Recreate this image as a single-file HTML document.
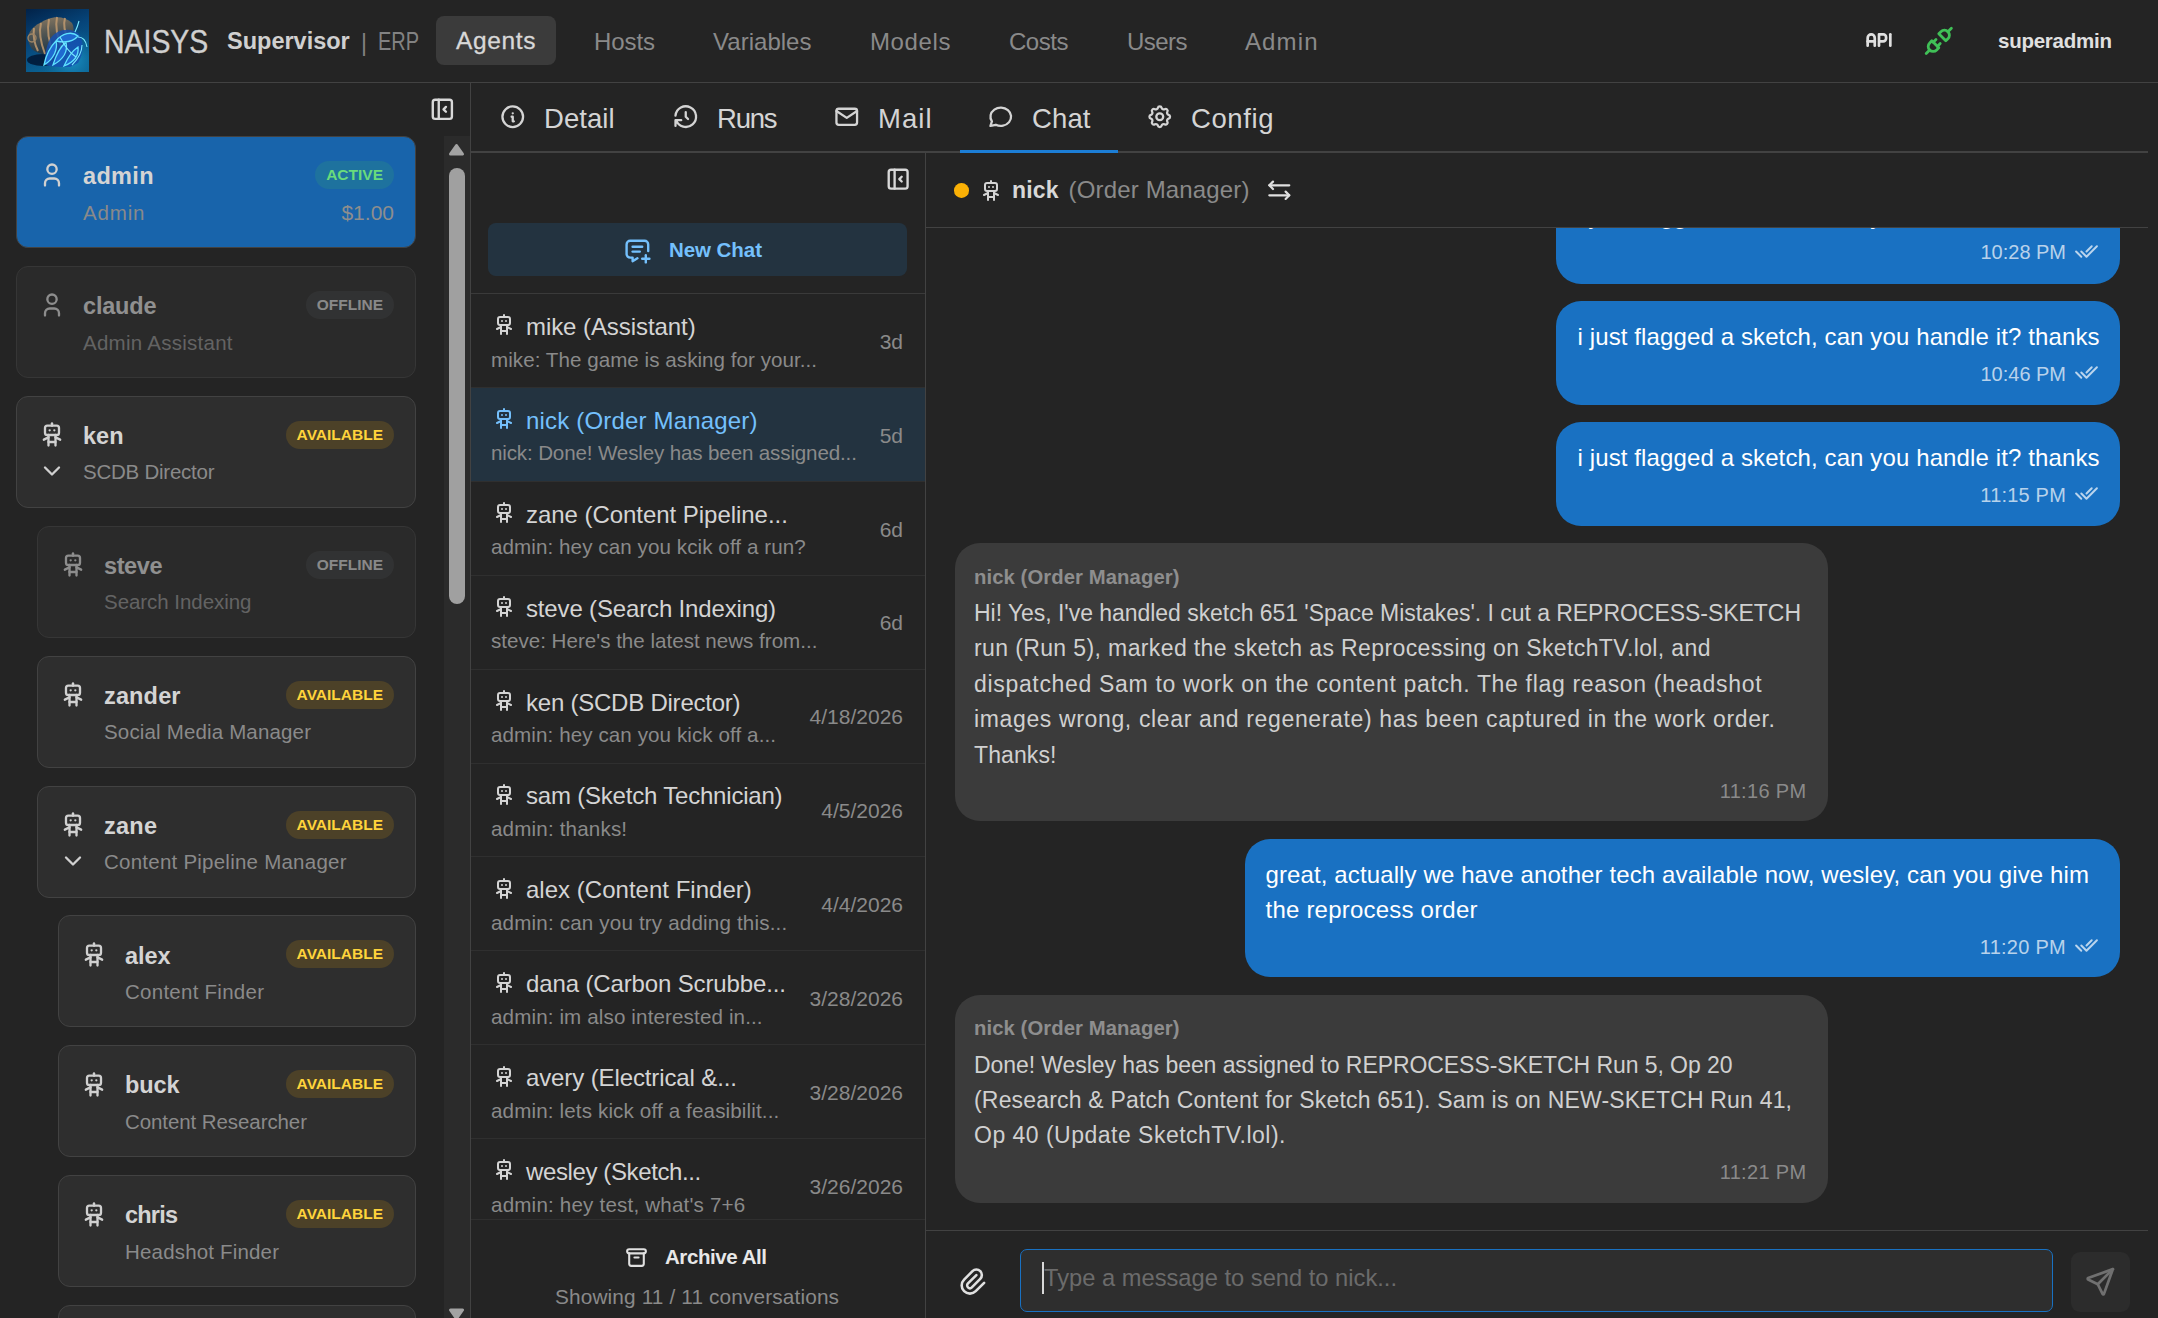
<!DOCTYPE html><html><head><meta charset="utf-8"><title>NAISYS Supervisor</title><style>
*{box-sizing:border-box;margin:0;padding:0}
html,body{width:2158px;height:1318px;overflow:hidden;background:#242424}
body{position:relative;font-family:"Liberation Sans",sans-serif;color:#c9c9c9}
.t{position:absolute;line-height:1;white-space:nowrap}
.b{position:absolute}
.ic{position:absolute;display:block}
</style></head><body>
<div class="b" style="left:0px;top:82px;width:2158px;height:1px;background:#424242"></div>
<svg class="ic" style="left:26px;top:9px;width:63px;height:63px" viewBox="0 0 63 63">
<defs>
<linearGradient id="lbg" x1="0" y1="0" x2="0.4" y2="1"><stop offset="0" stop-color="#022248"/><stop offset="0.5" stop-color="#06457a"/><stop offset="1" stop-color="#0b6494"/></linearGradient>
<radialGradient id="lglow" cx="0.72" cy="0.8" r="0.5"><stop offset="0" stop-color="#22a8e0" stop-opacity="0.7"/><stop offset="1" stop-color="#0e6a9a" stop-opacity="0"/></radialGradient>
<linearGradient id="lshell" x1="0" y1="0" x2="0.2" y2="1"><stop offset="0" stop-color="#8c7a62"/><stop offset="0.5" stop-color="#4f5452"/><stop offset="1" stop-color="#223848"/></linearGradient>
</defs>
<rect width="63" height="63" fill="url(#lbg)"/>
<rect width="63" height="63" fill="url(#lglow)"/>
<ellipse cx="17" cy="51" rx="16" ry="6" fill="#011a38" opacity="0.9"/>
<path d="M2 28 C3 20 12 14 22 10 C30 7 40 8 46 14 C50 20 46 34 36 42 C26 48 12 46 6 40 C3 36 2 32 2 28z" fill="url(#lshell)"/>
<path d="M8 19 C7 26 8 34 12 42 M15 14 C13 22 14 32 19 45 M23 10 C21 20 22 32 28 45 M31 8 C29 18 31 28 36 40 M39 9 C37 16 39 24 43 31" stroke="#c09a70" stroke-width="2" fill="none" opacity="0.85"/>
<circle cx="6" cy="29" r="4" fill="none" stroke="#9c8466" stroke-width="1.4"/>
<path d="M24 30 C30 20 44 18 52 24 C58 30 58 44 52 54 L44 58 C36 58 26 58 20 56 C18 48 20 38 24 30z" fill="#1550b0" opacity="0.85"/>
<path d="M18 56 C20 46 24 38 30 32 C32 40 28 50 18 56z M27 56 C30 46 34 38 40 33 C42 42 38 50 27 56z M38 57 C42 48 46 42 52 38 C53 46 48 53 38 57z M30 32 C36 24 46 22 52 27 C48 32 40 34 30 32z" fill="#1f6ad0" stroke="#5fe2ff" stroke-width="1.3"/>
<path d="M46 56 C52 50 56 44 56 36 M49 23 C51 19 52 16 53 12 M52 28 C57 28 60 32 61 38 M34 28 C38 36 44 44 50 48" stroke="#7aeaff" stroke-width="1.1" fill="none"/>
</svg>
<div class="t" style="left:104.00px;top:26.28px;font-size:32.5px;color:#d0d0d0;font-weight:400;transform:scaleX(0.875);transform-origin:0 0;-webkit-text-stroke:0.35px #d0d0d0">NAISYS</div>
<div class="t" style="left:227.00px;top:30.10px;font-size:23.5px;color:#d0d0d0;font-weight:700;">Supervisor</div>
<div class="t" style="left:361.00px;top:31.53px;font-size:23px;color:#828282;font-weight:400;">|</div>
<div class="t" style="left:378.00px;top:29.13px;font-size:25px;color:#828282;font-weight:400;transform:scaleX(0.8);transform-origin:0 0">ERP</div>
<div class="b" style="left:436px;top:16px;width:120px;height:49px;background:#3b3b3b;border-radius:8px"></div>
<div class="t" style="left:456.00px;top:29.26px;font-size:24.5px;color:#d8d8d8;font-weight:400;letter-spacing:0.644px;-webkit-text-stroke:0.3px #d8d8d8">Agents</div>
<div class="t" style="left:594.00px;top:29.68px;font-size:24px;color:#8a8a8a;font-weight:400;letter-spacing:-0.090px;">Hosts</div>
<div class="t" style="left:713.00px;top:29.68px;font-size:24px;color:#8a8a8a;font-weight:400;letter-spacing:0.027px;">Variables</div>
<div class="t" style="left:870.00px;top:29.68px;font-size:24px;color:#8a8a8a;font-weight:400;letter-spacing:0.625px;">Models</div>
<div class="t" style="left:1009.00px;top:29.68px;font-size:24px;color:#8a8a8a;font-weight:400;letter-spacing:-0.465px;">Costs</div>
<div class="t" style="left:1127.00px;top:29.68px;font-size:24px;color:#8a8a8a;font-weight:400;letter-spacing:-0.543px;">Users</div>
<div class="t" style="left:1245.00px;top:29.68px;font-size:24px;color:#8a8a8a;font-weight:400;letter-spacing:1.117px;">Admin</div>
<svg class="ic" style="left:1862.3px;top:22.8px;width:34px;height:34px;color:#e0e0e0;" viewBox="0 0 24 24" fill="none" stroke="currentColor" stroke-width="1.9" stroke-linecap="round" stroke-linejoin="round"><path d="M4 13h5"/><path d="M12 16v-8h3a2 2 0 0 1 2 2v1a2 2 0 0 1 -2 2h-3"/><path d="M20 8v8"/><path d="M9 16v-5.5a2.5 2.5 0 0 0 -5 0v5.5"/></svg>
<svg class="ic" style="left:1922px;top:24px;width:33.6px;height:33.6px;color:#40c057;" viewBox="0 0 24 24" fill="none" stroke="currentColor" stroke-width="2" stroke-linecap="round" stroke-linejoin="round"><path d="M7 12l5 5l-1.5 1.5a3.536 3.536 0 1 1 -5 -5l1.5 -1.5z"/><path d="M17 12l-5 -5l1.5 -1.5a3.536 3.536 0 1 1 5 5l-1.5 1.5z"/><path d="M3 21l2.5 -2.5"/><path d="M18.5 5.5l2.5 -2.5"/><path d="M10 11l-2 2"/><path d="M13 14l-2 2"/></svg>
<div class="t" style="left:1998.00px;top:31.24px;font-size:20.5px;color:#e0e0e0;font-weight:700;letter-spacing:-0.245px;">superadmin</div>
<div class="b" style="left:470px;top:83px;width:1px;height:1235px;background:#424242"></div>
<svg class="ic" style="left:428.4px;top:95.4px;width:28.7px;height:28.7px;color:#d8d8d8;" viewBox="0 0 24 24" fill="none" stroke="currentColor" stroke-width="2" stroke-linecap="round" stroke-linejoin="round"><path d="M4 6a2 2 0 0 1 2 -2h12a2 2 0 0 1 2 2v12a2 2 0 0 1 -2 2h-12a2 2 0 0 1 -2 -2z"/><path d="M9 4v16"/><path d="M15 10l-2 2l2 2"/></svg>
<div class="b" style="left:444px;top:136px;width:26px;height:1182px;background:#2b2b2b"></div>
<svg class="ic" style="left:448px;top:143px;width:17px;height:13px" viewBox="0 0 17 13"><path d="M8.5 2.5 L14.5 11 H2.5z" fill="#a3a3a3" stroke="#a3a3a3" stroke-width="3" stroke-linejoin="round"/></svg>
<div class="b" style="left:449px;top:168px;width:16px;height:436px;background:#a0a0a0;border-radius:8px"></div>
<svg class="ic" style="left:448px;top:1308px;width:17px;height:13px" viewBox="0 0 17 13"><path d="M8.5 10.5 L14.5 2 H2.5z" fill="#a3a3a3" stroke="#a3a3a3" stroke-width="3" stroke-linejoin="round"/></svg>
<div class="b" style="left:16px;top:136.0px;width:400px;height:112px;background:#1864ab;border:1px solid #424242;border-radius:12px;"></div>
<div class="b" style="left:0;top:0;width:2158px;height:1318px;">
<svg class="ic" style="left:38.4px;top:161.1px;width:28px;height:28px;color:#d0d0d0;" viewBox="0 0 24 24" fill="none" stroke="currentColor" stroke-width="2" stroke-linecap="round" stroke-linejoin="round"><path d="M8 7a4 4 0 1 0 8 0a4 4 0 0 0 -8 0"/><path d="M6 21v-2a4 4 0 0 1 4 -4h4a4 4 0 0 1 4 4v2"/></svg>
<div class="t" style="left:83.00px;top:165.10px;font-size:23.5px;color:#d4d4d4;font-weight:700;letter-spacing:0.320px;">admin</div>
<div class="t" style="left:83.00px;top:202.64px;font-size:20.5px;color:#8a8a8a;font-weight:400;letter-spacing:0.848px;">Admin</div>
<div class="b" style="right:1764px;top:161.0px;height:28px;padding:0 11px;border-radius:14px;background:rgba(64,192,87,0.15);color:#69db7c;font-weight:700;font-size:15.5px;line-height:28px;white-space:nowrap">ACTIVE</div>
<div class="t" style="right:1764.00px;top:202.22px;font-size:21px;color:#8e8e8e;font-weight:400;">$1.00</div>
</div>
<div class="b" style="left:16px;top:265.9px;width:400px;height:112px;background:#2e2e2e;border:1px solid #424242;border-radius:12px;opacity:0.6;"></div>
<div class="b" style="left:0;top:0;width:2158px;height:1318px;opacity:0.6;">
<svg class="ic" style="left:38.4px;top:291.0px;width:28px;height:28px;color:#d0d0d0;" viewBox="0 0 24 24" fill="none" stroke="currentColor" stroke-width="2" stroke-linecap="round" stroke-linejoin="round"><path d="M8 7a4 4 0 1 0 8 0a4 4 0 0 0 -8 0"/><path d="M6 21v-2a4 4 0 0 1 4 -4h4a4 4 0 0 1 4 4v2"/></svg>
<div class="t" style="left:83.00px;top:295.00px;font-size:23.5px;color:#d4d4d4;font-weight:700;letter-spacing:-0.191px;">claude</div>
<div class="t" style="left:83.00px;top:332.54px;font-size:20.5px;color:#8a8a8a;font-weight:400;letter-spacing:0.261px;">Admin Assistant</div>
<div class="b" style="right:1764px;top:290.9px;height:28px;padding:0 11px;border-radius:14px;background:rgba(134,142,150,0.15);color:#c9c9c9;font-weight:700;font-size:15.5px;line-height:28px;white-space:nowrap">OFFLINE</div>
</div>
<div class="b" style="left:16px;top:395.8px;width:400px;height:112px;background:#2e2e2e;border:1px solid #424242;border-radius:12px;"></div>
<div class="b" style="left:0;top:0;width:2158px;height:1318px;">
<svg class="ic" style="left:38px;top:421.40000000000003px;width:28px;height:28px;color:#d0d0d0;" viewBox="0 0 24 24" fill="none" stroke="currentColor" stroke-width="2" stroke-linecap="round" stroke-linejoin="round"><path d="M6 6a2 2 0 0 1 2 -2h8a2 2 0 0 1 2 2v4a2 2 0 0 1 -2 2h-8a2 2 0 0 1 -2 -2z"/><path d="M12 2v2"/><path d="M9 12v9"/><path d="M15 12v9"/><path d="M5 16l4 -2"/><path d="M15 14l4 2"/><path d="M9 18h6"/><path d="M10 8v.01"/><path d="M14 8v.01"/></svg>
<svg class="ic" style="left:38.4px;top:457.3px;width:28px;height:28px;color:#d0d0d0;" viewBox="0 0 24 24" fill="none" stroke="currentColor" stroke-width="2" stroke-linecap="round" stroke-linejoin="round"><path d="M6 9l6 6l6 -6"/></svg>
<div class="t" style="left:83.00px;top:424.90px;font-size:23.5px;color:#d4d4d4;font-weight:700;letter-spacing:0.000px;">ken</div>
<div class="t" style="left:83.00px;top:462.44px;font-size:20.5px;color:#8a8a8a;font-weight:400;letter-spacing:-0.243px;">SCDB Director</div>
<div class="b" style="right:1764px;top:420.8px;height:28px;padding:0 11px;border-radius:14px;background:rgba(250,176,5,0.15);color:#ffd43b;font-weight:700;font-size:15.5px;line-height:28px;white-space:nowrap">AVAILABLE</div>
</div>
<div class="b" style="left:37px;top:525.7px;width:379px;height:112px;background:#2e2e2e;border:1px solid #424242;border-radius:12px;opacity:0.6;"></div>
<div class="b" style="left:0;top:0;width:2158px;height:1318px;opacity:0.6;">
<svg class="ic" style="left:59px;top:551.3000000000001px;width:28px;height:28px;color:#d0d0d0;" viewBox="0 0 24 24" fill="none" stroke="currentColor" stroke-width="2" stroke-linecap="round" stroke-linejoin="round"><path d="M6 6a2 2 0 0 1 2 -2h8a2 2 0 0 1 2 2v4a2 2 0 0 1 -2 2h-8a2 2 0 0 1 -2 -2z"/><path d="M12 2v2"/><path d="M9 12v9"/><path d="M15 12v9"/><path d="M5 16l4 -2"/><path d="M15 14l4 2"/><path d="M9 18h6"/><path d="M10 8v.01"/><path d="M14 8v.01"/></svg>
<div class="t" style="left:104.00px;top:554.80px;font-size:23.5px;color:#d4d4d4;font-weight:700;letter-spacing:-0.402px;">steve</div>
<div class="t" style="left:104.00px;top:592.34px;font-size:20.5px;color:#8a8a8a;font-weight:400;letter-spacing:-0.047px;">Search Indexing</div>
<div class="b" style="right:1764px;top:550.7px;height:28px;padding:0 11px;border-radius:14px;background:rgba(134,142,150,0.15);color:#c9c9c9;font-weight:700;font-size:15.5px;line-height:28px;white-space:nowrap">OFFLINE</div>
</div>
<div class="b" style="left:37px;top:655.6px;width:379px;height:112px;background:#2e2e2e;border:1px solid #424242;border-radius:12px;"></div>
<div class="b" style="left:0;top:0;width:2158px;height:1318px;">
<svg class="ic" style="left:59px;top:681.2px;width:28px;height:28px;color:#d0d0d0;" viewBox="0 0 24 24" fill="none" stroke="currentColor" stroke-width="2" stroke-linecap="round" stroke-linejoin="round"><path d="M6 6a2 2 0 0 1 2 -2h8a2 2 0 0 1 2 2v4a2 2 0 0 1 -2 2h-8a2 2 0 0 1 -2 -2z"/><path d="M12 2v2"/><path d="M9 12v9"/><path d="M15 12v9"/><path d="M5 16l4 -2"/><path d="M15 14l4 2"/><path d="M9 18h6"/><path d="M10 8v.01"/><path d="M14 8v.01"/></svg>
<div class="t" style="left:104.00px;top:684.70px;font-size:23.5px;color:#d4d4d4;font-weight:700;letter-spacing:0.150px;">zander</div>
<div class="t" style="left:104.00px;top:722.24px;font-size:20.5px;color:#8a8a8a;font-weight:400;letter-spacing:0.159px;">Social Media Manager</div>
<div class="b" style="right:1764px;top:680.6px;height:28px;padding:0 11px;border-radius:14px;background:rgba(250,176,5,0.15);color:#ffd43b;font-weight:700;font-size:15.5px;line-height:28px;white-space:nowrap">AVAILABLE</div>
</div>
<div class="b" style="left:37px;top:785.5px;width:379px;height:112px;background:#2e2e2e;border:1px solid #424242;border-radius:12px;"></div>
<div class="b" style="left:0;top:0;width:2158px;height:1318px;">
<svg class="ic" style="left:59px;top:811.1px;width:28px;height:28px;color:#d0d0d0;" viewBox="0 0 24 24" fill="none" stroke="currentColor" stroke-width="2" stroke-linecap="round" stroke-linejoin="round"><path d="M6 6a2 2 0 0 1 2 -2h8a2 2 0 0 1 2 2v4a2 2 0 0 1 -2 2h-8a2 2 0 0 1 -2 -2z"/><path d="M12 2v2"/><path d="M9 12v9"/><path d="M15 12v9"/><path d="M5 16l4 -2"/><path d="M15 14l4 2"/><path d="M9 18h6"/><path d="M10 8v.01"/><path d="M14 8v.01"/></svg>
<svg class="ic" style="left:59.4px;top:847.0px;width:28px;height:28px;color:#d0d0d0;" viewBox="0 0 24 24" fill="none" stroke="currentColor" stroke-width="2" stroke-linecap="round" stroke-linejoin="round"><path d="M6 9l6 6l6 -6"/></svg>
<div class="t" style="left:104.00px;top:814.60px;font-size:23.5px;color:#d4d4d4;font-weight:700;letter-spacing:0.250px;">zane</div>
<div class="t" style="left:104.00px;top:852.14px;font-size:20.5px;color:#8a8a8a;font-weight:400;letter-spacing:0.237px;">Content Pipeline Manager</div>
<div class="b" style="right:1764px;top:810.5px;height:28px;padding:0 11px;border-radius:14px;background:rgba(250,176,5,0.15);color:#ffd43b;font-weight:700;font-size:15.5px;line-height:28px;white-space:nowrap">AVAILABLE</div>
</div>
<div class="b" style="left:58px;top:915.4px;width:358px;height:112px;background:#2e2e2e;border:1px solid #424242;border-radius:12px;"></div>
<div class="b" style="left:0;top:0;width:2158px;height:1318px;">
<svg class="ic" style="left:80px;top:941.0px;width:28px;height:28px;color:#d0d0d0;" viewBox="0 0 24 24" fill="none" stroke="currentColor" stroke-width="2" stroke-linecap="round" stroke-linejoin="round"><path d="M6 6a2 2 0 0 1 2 -2h8a2 2 0 0 1 2 2v4a2 2 0 0 1 -2 2h-8a2 2 0 0 1 -2 -2z"/><path d="M12 2v2"/><path d="M9 12v9"/><path d="M15 12v9"/><path d="M5 16l4 -2"/><path d="M15 14l4 2"/><path d="M9 18h6"/><path d="M10 8v.01"/><path d="M14 8v.01"/></svg>
<div class="t" style="left:125.00px;top:944.50px;font-size:23.5px;color:#d4d4d4;font-weight:700;letter-spacing:-0.083px;">alex</div>
<div class="t" style="left:125.00px;top:982.04px;font-size:20.5px;color:#8a8a8a;font-weight:400;letter-spacing:0.261px;">Content Finder</div>
<div class="b" style="right:1764px;top:940.4px;height:28px;padding:0 11px;border-radius:14px;background:rgba(250,176,5,0.15);color:#ffd43b;font-weight:700;font-size:15.5px;line-height:28px;white-space:nowrap">AVAILABLE</div>
</div>
<div class="b" style="left:58px;top:1045.3px;width:358px;height:112px;background:#2e2e2e;border:1px solid #424242;border-radius:12px;"></div>
<div class="b" style="left:0;top:0;width:2158px;height:1318px;">
<svg class="ic" style="left:80px;top:1070.8999999999999px;width:28px;height:28px;color:#d0d0d0;" viewBox="0 0 24 24" fill="none" stroke="currentColor" stroke-width="2" stroke-linecap="round" stroke-linejoin="round"><path d="M6 6a2 2 0 0 1 2 -2h8a2 2 0 0 1 2 2v4a2 2 0 0 1 -2 2h-8a2 2 0 0 1 -2 -2z"/><path d="M12 2v2"/><path d="M9 12v9"/><path d="M15 12v9"/><path d="M5 16l4 -2"/><path d="M15 14l4 2"/><path d="M9 18h6"/><path d="M10 8v.01"/><path d="M14 8v.01"/></svg>
<div class="t" style="left:125.00px;top:1074.40px;font-size:23.5px;color:#d4d4d4;font-weight:700;letter-spacing:-0.120px;">buck</div>
<div class="t" style="left:125.00px;top:1111.94px;font-size:20.5px;color:#8a8a8a;font-weight:400;letter-spacing:-0.086px;">Content Researcher</div>
<div class="b" style="right:1764px;top:1070.3px;height:28px;padding:0 11px;border-radius:14px;background:rgba(250,176,5,0.15);color:#ffd43b;font-weight:700;font-size:15.5px;line-height:28px;white-space:nowrap">AVAILABLE</div>
</div>
<div class="b" style="left:58px;top:1175.2px;width:358px;height:112px;background:#2e2e2e;border:1px solid #424242;border-radius:12px;"></div>
<div class="b" style="left:0;top:0;width:2158px;height:1318px;">
<svg class="ic" style="left:80px;top:1200.8px;width:28px;height:28px;color:#d0d0d0;" viewBox="0 0 24 24" fill="none" stroke="currentColor" stroke-width="2" stroke-linecap="round" stroke-linejoin="round"><path d="M6 6a2 2 0 0 1 2 -2h8a2 2 0 0 1 2 2v4a2 2 0 0 1 -2 2h-8a2 2 0 0 1 -2 -2z"/><path d="M12 2v2"/><path d="M9 12v9"/><path d="M15 12v9"/><path d="M5 16l4 -2"/><path d="M15 14l4 2"/><path d="M9 18h6"/><path d="M10 8v.01"/><path d="M14 8v.01"/></svg>
<div class="t" style="left:125.00px;top:1204.30px;font-size:23.5px;color:#d4d4d4;font-weight:700;letter-spacing:-0.793px;">chris</div>
<div class="t" style="left:125.00px;top:1241.84px;font-size:20.5px;color:#8a8a8a;font-weight:400;letter-spacing:0.174px;">Headshot Finder</div>
<div class="b" style="right:1764px;top:1200.2px;height:28px;padding:0 11px;border-radius:14px;background:rgba(250,176,5,0.15);color:#ffd43b;font-weight:700;font-size:15.5px;line-height:28px;white-space:nowrap">AVAILABLE</div>
</div>
<div class="b" style="left:58px;top:1305.1px;width:358px;height:112px;background:#2e2e2e;border:1px solid #424242;border-radius:12px;"></div>
<div class="b" style="left:0;top:0;width:2158px;height:1318px;">
<svg class="ic" style="left:80px;top:1330.6999999999998px;width:28px;height:28px;color:#d0d0d0;" viewBox="0 0 24 24" fill="none" stroke="currentColor" stroke-width="2" stroke-linecap="round" stroke-linejoin="round"><path d="M6 6a2 2 0 0 1 2 -2h8a2 2 0 0 1 2 2v4a2 2 0 0 1 -2 2h-8a2 2 0 0 1 -2 -2z"/><path d="M12 2v2"/><path d="M9 12v9"/><path d="M15 12v9"/><path d="M5 16l4 -2"/><path d="M15 14l4 2"/><path d="M9 18h6"/><path d="M10 8v.01"/><path d="M14 8v.01"/></svg>
<div class="t" style="left:125.00px;top:1334.20px;font-size:23.5px;color:#d4d4d4;font-weight:700;">dave</div>
<div class="t" style="left:125.00px;top:1371.74px;font-size:20.5px;color:#8a8a8a;font-weight:400;">Writer</div>
<div class="b" style="right:1764px;top:1330.1px;height:28px;padding:0 11px;border-radius:14px;background:rgba(250,176,5,0.15);color:#ffd43b;font-weight:700;font-size:15.5px;line-height:28px;white-space:nowrap">AVAILABLE</div>
</div>
<div class="b" style="left:471px;top:151px;width:1677px;height:2px;background:#424242"></div>
<svg class="ic" style="left:498.9px;top:102.9px;width:27.5px;height:27.5px;color:#d4d4d4;" viewBox="0 0 24 24" fill="none" stroke="currentColor" stroke-width="2" stroke-linecap="round" stroke-linejoin="round"><path d="M3 12a9 9 0 1 0 18 0a9 9 0 0 0 -18 0"/><path d="M12 9h.01"/><path d="M11 12h1v4h1"/></svg>
<div class="t" style="left:544.00px;top:104.72px;font-size:27.5px;color:#d4d4d4;font-weight:400;letter-spacing:0.037px;">Detail</div>
<svg class="ic" style="left:671.5px;top:102.9px;width:27.5px;height:27.5px;color:#d4d4d4;" viewBox="0 0 24 24" fill="none" stroke="currentColor" stroke-width="2" stroke-linecap="round" stroke-linejoin="round"><path d="M12 8l0 4l2 2"/><path d="M3.05 11a9 9 0 1 1 .5 4m-.5 5v-5h5"/></svg>
<div class="t" style="left:717.00px;top:104.72px;font-size:27.5px;color:#d4d4d4;font-weight:400;letter-spacing:-1.234px;">Runs</div>
<svg class="ic" style="left:832.9px;top:102.9px;width:27.5px;height:27.5px;color:#d4d4d4;" viewBox="0 0 24 24" fill="none" stroke="currentColor" stroke-width="2" stroke-linecap="round" stroke-linejoin="round"><path d="M3 7a2 2 0 0 1 2 -2h14a2 2 0 0 1 2 2v10a2 2 0 0 1 -2 2h-14a2 2 0 0 1 -2 -2v-10z"/><path d="M3 7l9 6l9 -6"/></svg>
<div class="t" style="left:878.00px;top:104.72px;font-size:27.5px;color:#d4d4d4;font-weight:400;letter-spacing:1.026px;">Mail</div>
<svg class="ic" style="left:986.9px;top:102.9px;width:27.5px;height:27.5px;color:#d4d4d4;" viewBox="0 0 24 24" fill="none" stroke="currentColor" stroke-width="2" stroke-linecap="round" stroke-linejoin="round"><path d="M3 20l1.3 -3.9c-2.324 -3.437 -1.426 -7.872 2.1 -10.374c3.526 -2.501 8.59 -2.296 11.845 .48c3.255 2.777 3.695 7.266 1.029 10.501c-2.666 3.235 -7.615 4.215 -11.574 2.293l-4.7 1"/></svg>
<div class="t" style="left:1032.00px;top:104.72px;font-size:27.5px;color:#d4d4d4;font-weight:400;letter-spacing:0.135px;">Chat</div>
<svg class="ic" style="left:1145.9px;top:102.9px;width:27.5px;height:27.5px;color:#d4d4d4;" viewBox="0 0 24 24" fill="none" stroke="currentColor" stroke-width="2" stroke-linecap="round" stroke-linejoin="round"><path d="M10.325 4.317c.426 -1.756 2.924 -1.756 3.35 0a1.724 1.724 0 0 0 2.573 1.066c1.543 -.94 3.31 .826 2.37 2.37a1.724 1.724 0 0 0 1.065 2.572c1.756 .426 1.756 2.924 0 3.35a1.724 1.724 0 0 0 -1.066 2.573c.94 1.543 -.826 3.31 -2.37 2.37a1.724 1.724 0 0 0 -2.572 1.065c-.426 1.756 -2.924 1.756 -3.35 0a1.724 1.724 0 0 0 -2.573 -1.066c-1.543 .94 -3.31 -.826 -2.37 -2.37a1.724 1.724 0 0 0 -1.065 -2.572c-1.756 -.426 -1.756 -2.924 0 -3.35a1.724 1.724 0 0 0 1.066 -2.573c-.94 -1.543 .826 -3.31 2.37 -2.37c1 .608 2.296 .07 2.572 -1.065z"/><path d="M9 12a3 3 0 1 0 6 0a3 3 0 0 0 -6 0"/></svg>
<div class="t" style="left:1191.00px;top:104.72px;font-size:27.5px;color:#d4d4d4;font-weight:400;letter-spacing:0.600px;">Config</div>
<div class="b" style="left:960px;top:150px;width:158px;height:3px;background:#1c7ed6"></div>
<div class="b" style="left:925px;top:153px;width:1px;height:1165px;background:#424242"></div>
<svg class="ic" style="left:883.9px;top:165px;width:28.3px;height:28.3px;color:#d8d8d8;" viewBox="0 0 24 24" fill="none" stroke="currentColor" stroke-width="2" stroke-linecap="round" stroke-linejoin="round"><path d="M4 6a2 2 0 0 1 2 -2h12a2 2 0 0 1 2 2v12a2 2 0 0 1 -2 2h-12a2 2 0 0 1 -2 -2z"/><path d="M9 4v16"/><path d="M15 10l-2 2l2 2"/></svg>
<div class="b" style="left:488px;top:223px;width:419px;height:53px;background:rgba(34,139,230,0.15);border-radius:8px"></div>
<svg class="ic" style="left:623.3px;top:235.6px;width:28.8px;height:28.8px;color:#74c0fc;" viewBox="0 0 24 24" fill="none" stroke="currentColor" stroke-width="2" stroke-linecap="round" stroke-linejoin="round"><path d="M8 9h8"/><path d="M8 13h6"/><path d="M12.01 18.594l-4.01 2.406v-3h-2a3 3 0 0 1 -3 -3v-8a3 3 0 0 1 3 -3h12a3 3 0 0 1 3 3v5.5"/><path d="M16 19h6"/><path d="M19 16v6"/></svg>
<div class="t" style="left:669.00px;top:240.34px;font-size:20.5px;color:#74c0fc;font-weight:700;letter-spacing:-0.058px;">New Chat</div>
<div class="b" style="left:471px;top:293px;width:454px;height:1px;background:#3a3a3a"></div>
<div class="b" style="left:471px;top:294px;width:454px;height:925px;overflow:hidden">
<div class="b" style="left:0px;top:92.89999999999998px;width:454px;height:1px;background:#2f2f2f"></div>
<svg class="ic" style="left:21px;top:19.30000000000001px;width:24px;height:24px;color:#d4d4d4;" viewBox="0 0 24 24" fill="none" stroke="currentColor" stroke-width="2" stroke-linecap="round" stroke-linejoin="round"><path d="M6 6a2 2 0 0 1 2 -2h8a2 2 0 0 1 2 2v4a2 2 0 0 1 -2 2h-8a2 2 0 0 1 -2 -2z"/><path d="M12 2v2"/><path d="M9 12v9"/><path d="M15 12v9"/><path d="M5 16l4 -2"/><path d="M15 14l4 2"/><path d="M9 18h6"/><path d="M10 8v.01"/><path d="M14 8v.01"/></svg>
<div class="t" style="left:55.00px;top:20.98px;font-size:24px;color:#d4d4d4;font-weight:400;letter-spacing:-0.067px;">mike (Assistant)</div>
<div class="t" style="left:20.00px;top:55.56px;font-size:20.6px;color:#8a8a8a;font-weight:400;letter-spacing:0.040px;">mike: The game is asking for your...</div>
<div class="t" style="right:22.00px;top:36.72px;font-size:21px;color:#8a8a8a;font-weight:400;">3d</div>
<div class="b" style="left:0px;top:93.89999999999998px;width:454px;height:92.9px;background:rgba(34,139,230,0.15)"></div>
<div class="b" style="left:0px;top:186.79999999999995px;width:454px;height:1px;background:#2f2f2f"></div>
<svg class="ic" style="left:21px;top:113.19999999999999px;width:24px;height:24px;color:#74c0fc;" viewBox="0 0 24 24" fill="none" stroke="currentColor" stroke-width="2" stroke-linecap="round" stroke-linejoin="round"><path d="M6 6a2 2 0 0 1 2 -2h8a2 2 0 0 1 2 2v4a2 2 0 0 1 -2 2h-8a2 2 0 0 1 -2 -2z"/><path d="M12 2v2"/><path d="M9 12v9"/><path d="M15 12v9"/><path d="M5 16l4 -2"/><path d="M15 14l4 2"/><path d="M9 18h6"/><path d="M10 8v.01"/><path d="M14 8v.01"/></svg>
<div class="t" style="left:55.00px;top:114.88px;font-size:24px;color:#74c0fc;font-weight:400;letter-spacing:0.180px;">nick (Order Manager)</div>
<div class="t" style="left:20.00px;top:149.46px;font-size:20.6px;color:#8a8a8a;font-weight:400;letter-spacing:-0.152px;">nick: Done! Wesley has been assigned...</div>
<div class="t" style="right:22.00px;top:130.62px;font-size:21px;color:#8a8a8a;font-weight:400;">5d</div>
<div class="b" style="left:0px;top:280.70000000000005px;width:454px;height:1px;background:#2f2f2f"></div>
<svg class="ic" style="left:21px;top:207.10000000000002px;width:24px;height:24px;color:#d4d4d4;" viewBox="0 0 24 24" fill="none" stroke="currentColor" stroke-width="2" stroke-linecap="round" stroke-linejoin="round"><path d="M6 6a2 2 0 0 1 2 -2h8a2 2 0 0 1 2 2v4a2 2 0 0 1 -2 2h-8a2 2 0 0 1 -2 -2z"/><path d="M12 2v2"/><path d="M9 12v9"/><path d="M15 12v9"/><path d="M5 16l4 -2"/><path d="M15 14l4 2"/><path d="M9 18h6"/><path d="M10 8v.01"/><path d="M14 8v.01"/></svg>
<div class="t" style="left:55.00px;top:208.78px;font-size:24px;color:#d4d4d4;font-weight:400;letter-spacing:-0.043px;">zane (Content Pipeline...</div>
<div class="t" style="left:20.00px;top:243.36px;font-size:20.6px;color:#8a8a8a;font-weight:400;letter-spacing:0.078px;">admin: hey can you kcik off a run?</div>
<div class="t" style="right:22.00px;top:224.52px;font-size:21px;color:#8a8a8a;font-weight:400;">6d</div>
<div class="b" style="left:0px;top:374.6px;width:454px;height:1px;background:#2f2f2f"></div>
<svg class="ic" style="left:21px;top:301.0px;width:24px;height:24px;color:#d4d4d4;" viewBox="0 0 24 24" fill="none" stroke="currentColor" stroke-width="2" stroke-linecap="round" stroke-linejoin="round"><path d="M6 6a2 2 0 0 1 2 -2h8a2 2 0 0 1 2 2v4a2 2 0 0 1 -2 2h-8a2 2 0 0 1 -2 -2z"/><path d="M12 2v2"/><path d="M9 12v9"/><path d="M15 12v9"/><path d="M5 16l4 -2"/><path d="M15 14l4 2"/><path d="M9 18h6"/><path d="M10 8v.01"/><path d="M14 8v.01"/></svg>
<div class="t" style="left:55.00px;top:302.68px;font-size:24px;color:#d4d4d4;font-weight:400;letter-spacing:-0.153px;">steve (Search Indexing)</div>
<div class="t" style="left:20.00px;top:337.26px;font-size:20.6px;color:#8a8a8a;font-weight:400;letter-spacing:-0.008px;">steve: Here's the latest news from...</div>
<div class="t" style="right:22.00px;top:318.42px;font-size:21px;color:#8a8a8a;font-weight:400;">6d</div>
<div class="b" style="left:0px;top:468.5px;width:454px;height:1px;background:#2f2f2f"></div>
<svg class="ic" style="left:21px;top:394.9px;width:24px;height:24px;color:#d4d4d4;" viewBox="0 0 24 24" fill="none" stroke="currentColor" stroke-width="2" stroke-linecap="round" stroke-linejoin="round"><path d="M6 6a2 2 0 0 1 2 -2h8a2 2 0 0 1 2 2v4a2 2 0 0 1 -2 2h-8a2 2 0 0 1 -2 -2z"/><path d="M12 2v2"/><path d="M9 12v9"/><path d="M15 12v9"/><path d="M5 16l4 -2"/><path d="M15 14l4 2"/><path d="M9 18h6"/><path d="M10 8v.01"/><path d="M14 8v.01"/></svg>
<div class="t" style="left:55.00px;top:396.58px;font-size:24px;color:#d4d4d4;font-weight:400;letter-spacing:-0.229px;">ken (SCDB Director)</div>
<div class="t" style="left:20.00px;top:431.16px;font-size:20.6px;color:#8a8a8a;font-weight:400;letter-spacing:0.085px;">admin: hey can you kick off a...</div>
<div class="t" style="right:22.00px;top:412.32px;font-size:21px;color:#8a8a8a;font-weight:400;">4/18/2026</div>
<div class="b" style="left:0px;top:562.4px;width:454px;height:1px;background:#2f2f2f"></div>
<svg class="ic" style="left:21px;top:488.79999999999995px;width:24px;height:24px;color:#d4d4d4;" viewBox="0 0 24 24" fill="none" stroke="currentColor" stroke-width="2" stroke-linecap="round" stroke-linejoin="round"><path d="M6 6a2 2 0 0 1 2 -2h8a2 2 0 0 1 2 2v4a2 2 0 0 1 -2 2h-8a2 2 0 0 1 -2 -2z"/><path d="M12 2v2"/><path d="M9 12v9"/><path d="M15 12v9"/><path d="M5 16l4 -2"/><path d="M15 14l4 2"/><path d="M9 18h6"/><path d="M10 8v.01"/><path d="M14 8v.01"/></svg>
<div class="t" style="left:55.00px;top:490.48px;font-size:24px;color:#d4d4d4;font-weight:400;letter-spacing:-0.200px;">sam (Sketch Technician)</div>
<div class="t" style="left:20.00px;top:525.06px;font-size:20.6px;color:#8a8a8a;font-weight:400;letter-spacing:0.166px;">admin: thanks!</div>
<div class="t" style="right:22.00px;top:506.22px;font-size:21px;color:#8a8a8a;font-weight:400;">4/5/2026</div>
<div class="b" style="left:0px;top:656.3000000000001px;width:454px;height:1px;background:#2f2f2f"></div>
<svg class="ic" style="left:21px;top:582.7px;width:24px;height:24px;color:#d4d4d4;" viewBox="0 0 24 24" fill="none" stroke="currentColor" stroke-width="2" stroke-linecap="round" stroke-linejoin="round"><path d="M6 6a2 2 0 0 1 2 -2h8a2 2 0 0 1 2 2v4a2 2 0 0 1 -2 2h-8a2 2 0 0 1 -2 -2z"/><path d="M12 2v2"/><path d="M9 12v9"/><path d="M15 12v9"/><path d="M5 16l4 -2"/><path d="M15 14l4 2"/><path d="M9 18h6"/><path d="M10 8v.01"/><path d="M14 8v.01"/></svg>
<div class="t" style="left:55.00px;top:584.38px;font-size:24px;color:#d4d4d4;font-weight:400;letter-spacing:0.018px;">alex (Content Finder)</div>
<div class="t" style="left:20.00px;top:618.96px;font-size:20.6px;color:#8a8a8a;font-weight:400;letter-spacing:0.170px;">admin: can you try adding this...</div>
<div class="t" style="right:22.00px;top:600.12px;font-size:21px;color:#8a8a8a;font-weight:400;">4/4/2026</div>
<div class="b" style="left:0px;top:750.2px;width:454px;height:1px;background:#2f2f2f"></div>
<svg class="ic" style="left:21px;top:676.6px;width:24px;height:24px;color:#d4d4d4;" viewBox="0 0 24 24" fill="none" stroke="currentColor" stroke-width="2" stroke-linecap="round" stroke-linejoin="round"><path d="M6 6a2 2 0 0 1 2 -2h8a2 2 0 0 1 2 2v4a2 2 0 0 1 -2 2h-8a2 2 0 0 1 -2 -2z"/><path d="M12 2v2"/><path d="M9 12v9"/><path d="M15 12v9"/><path d="M5 16l4 -2"/><path d="M15 14l4 2"/><path d="M9 18h6"/><path d="M10 8v.01"/><path d="M14 8v.01"/></svg>
<div class="t" style="left:55.00px;top:678.28px;font-size:24px;color:#d4d4d4;font-weight:400;letter-spacing:-0.133px;">dana (Carbon Scrubbe...</div>
<div class="t" style="left:20.00px;top:712.86px;font-size:20.6px;color:#8a8a8a;font-weight:400;letter-spacing:0.125px;">admin: im also interested in...</div>
<div class="t" style="right:22.00px;top:694.02px;font-size:21px;color:#8a8a8a;font-weight:400;">3/28/2026</div>
<div class="b" style="left:0px;top:844.1000000000001px;width:454px;height:1px;background:#2f2f2f"></div>
<svg class="ic" style="left:21px;top:770.5px;width:24px;height:24px;color:#d4d4d4;" viewBox="0 0 24 24" fill="none" stroke="currentColor" stroke-width="2" stroke-linecap="round" stroke-linejoin="round"><path d="M6 6a2 2 0 0 1 2 -2h8a2 2 0 0 1 2 2v4a2 2 0 0 1 -2 2h-8a2 2 0 0 1 -2 -2z"/><path d="M12 2v2"/><path d="M9 12v9"/><path d="M15 12v9"/><path d="M5 16l4 -2"/><path d="M15 14l4 2"/><path d="M9 18h6"/><path d="M10 8v.01"/><path d="M14 8v.01"/></svg>
<div class="t" style="left:55.00px;top:772.18px;font-size:24px;color:#d4d4d4;font-weight:400;letter-spacing:-0.114px;">avery (Electrical &amp;...</div>
<div class="t" style="left:20.00px;top:806.76px;font-size:20.6px;color:#8a8a8a;font-weight:400;letter-spacing:0.138px;">admin: lets kick off a feasibilit...</div>
<div class="t" style="right:22.00px;top:787.92px;font-size:21px;color:#8a8a8a;font-weight:400;">3/28/2026</div>
<div class="b" style="left:0px;top:938.0px;width:454px;height:1px;background:#2f2f2f"></div>
<svg class="ic" style="left:21px;top:864.3999999999999px;width:24px;height:24px;color:#d4d4d4;" viewBox="0 0 24 24" fill="none" stroke="currentColor" stroke-width="2" stroke-linecap="round" stroke-linejoin="round"><path d="M6 6a2 2 0 0 1 2 -2h8a2 2 0 0 1 2 2v4a2 2 0 0 1 -2 2h-8a2 2 0 0 1 -2 -2z"/><path d="M12 2v2"/><path d="M9 12v9"/><path d="M15 12v9"/><path d="M5 16l4 -2"/><path d="M15 14l4 2"/><path d="M9 18h6"/><path d="M10 8v.01"/><path d="M14 8v.01"/></svg>
<div class="t" style="left:55.00px;top:866.08px;font-size:24px;color:#d4d4d4;font-weight:400;letter-spacing:-0.382px;">wesley (Sketch...</div>
<div class="t" style="left:20.00px;top:900.66px;font-size:20.6px;color:#8a8a8a;font-weight:400;letter-spacing:0.185px;">admin: hey test, what's 7+6</div>
<div class="t" style="right:22.00px;top:881.82px;font-size:21px;color:#8a8a8a;font-weight:400;">3/26/2026</div>
</div>
<div class="b" style="left:471px;top:1219px;width:454px;height:1px;background:#2f2f2f"></div>
<svg class="ic" style="left:623.5px;top:1244.5px;width:25px;height:25px;color:#e0e0e0;" viewBox="0 0 24 24" fill="none" stroke="currentColor" stroke-width="2" stroke-linecap="round" stroke-linejoin="round"><path d="M3 6a2 2 0 0 1 2 -2h14a2 2 0 0 1 2 2a2 2 0 0 1 -2 2h-14a2 2 0 0 1 -2 -2z"/><path d="M5 8v10a2 2 0 0 0 2 2h10a2 2 0 0 0 2 -2v-10"/><path d="M10 12l4 0"/></svg>
<div class="t" style="left:665.00px;top:1246.84px;font-size:20.5px;color:#e8e8e8;font-weight:700;letter-spacing:-0.434px;">Archive All</div>
<div class="t" style="left:555.00px;top:1287.09px;font-size:20.8px;color:#8a8a8a;font-weight:400;letter-spacing:0.137px;">Showing 11 / 11 conversations</div>
<div class="b" style="left:954px;top:183.3px;width:14.6px;height:14.6px;border-radius:50%;background:#fab005"></div>
<svg class="ic" style="left:978.6px;top:178.6px;width:24px;height:24px;color:#d4d4d4;" viewBox="0 0 24 24" fill="none" stroke="currentColor" stroke-width="2" stroke-linecap="round" stroke-linejoin="round"><path d="M6 6a2 2 0 0 1 2 -2h8a2 2 0 0 1 2 2v4a2 2 0 0 1 -2 2h-8a2 2 0 0 1 -2 -2z"/><path d="M12 2v2"/><path d="M9 12v9"/><path d="M15 12v9"/><path d="M5 16l4 -2"/><path d="M15 14l4 2"/><path d="M9 18h6"/><path d="M10 8v.01"/><path d="M14 8v.01"/></svg>
<div class="t" style="left:1012.00px;top:179.33px;font-size:23px;color:#d8d8d8;font-weight:700;letter-spacing:0.156px;">nick</div>
<div class="t" style="left:1068.50px;top:178.48px;font-size:24px;color:#8a8a8a;font-weight:400;letter-spacing:0.162px;">(Order Manager)</div>
<svg class="ic" style="left:1265.8px;top:176.7px;width:26.6px;height:26.6px;color:#e0e0e0;" viewBox="0 0 24 24" fill="none" stroke="currentColor" stroke-width="2" stroke-linecap="round" stroke-linejoin="round"><path d="M3 7.5h18"/><path d="M6.3 4.2l-3.3 3.3l3.3 3.3"/><path d="M21 16.5h-18"/><path d="M17.7 13.2l3.3 3.3l-3.3 3.3"/></svg>
<div class="b" style="left:926px;top:227px;width:1222px;height:1px;background:#424242"></div>
<div class="b" style="left:926px;top:228px;width:1222px;height:1002px;overflow:hidden">
<div class="b" style="left:630px;top:-48.30000000000001px;width:564px;height:104.0px;background:#1971c2;border-radius:25px"></div>
<div class="t" style="left:651.50px;top:-24.12px;font-size:24px;color:#ffffff;font-weight:400;letter-spacing:0.116px;">i just flagged a sketch, can you handle it? thanks</div>
<div class="t" style="right:82.00px;top:14.27px;font-size:20px;color:rgba(255,255,255,0.7);font-weight:400;letter-spacing:-0.016px;">10:28 PM</div>
<svg class="ic" style="left:1147.5px;top:10.699999999999989px;width:25px;height:25px;color:rgba(255,255,255,0.7);" viewBox="0 0 24 24" fill="none" stroke="currentColor" stroke-width="1.9" stroke-linecap="round" stroke-linejoin="round"><path d="M7 12l5 5l10 -10"/><path d="M2 12l5 5m5 -5l5 -5"/></svg>
<div class="b" style="left:630px;top:73px;width:564px;height:104px;background:#1971c2;border-radius:25px"></div>
<div class="t" style="left:651.50px;top:97.18px;font-size:24px;color:#ffffff;font-weight:400;letter-spacing:0.116px;">i just flagged a sketch, can you handle it? thanks</div>
<div class="t" style="right:82.00px;top:135.57px;font-size:20px;color:rgba(255,255,255,0.7);font-weight:400;letter-spacing:-0.016px;">10:46 PM</div>
<svg class="ic" style="left:1147.5px;top:132px;width:25px;height:25px;color:rgba(255,255,255,0.7);" viewBox="0 0 24 24" fill="none" stroke="currentColor" stroke-width="1.9" stroke-linecap="round" stroke-linejoin="round"><path d="M7 12l5 5l10 -10"/><path d="M2 12l5 5m5 -5l5 -5"/></svg>
<div class="b" style="left:630px;top:194px;width:564px;height:104px;background:#1971c2;border-radius:25px"></div>
<div class="t" style="left:651.50px;top:218.18px;font-size:24px;color:#ffffff;font-weight:400;letter-spacing:0.116px;">i just flagged a sketch, can you handle it? thanks</div>
<div class="t" style="right:82.00px;top:256.57px;font-size:20px;color:rgba(255,255,255,0.7);font-weight:400;letter-spacing:0.196px;">11:15 PM</div>
<svg class="ic" style="left:1147.5px;top:253px;width:25px;height:25px;color:rgba(255,255,255,0.7);" viewBox="0 0 24 24" fill="none" stroke="currentColor" stroke-width="1.9" stroke-linecap="round" stroke-linejoin="round"><path d="M7 12l5 5l10 -10"/><path d="M2 12l5 5m5 -5l5 -5"/></svg>
<div class="b" style="left:28.5px;top:315.29999999999995px;width:873.0px;height:278.20000000000005px;background:#3b3b3b;border-radius:25px"></div>
<div class="t" style="left:48.00px;top:338.61px;font-size:20.3px;color:#8e8e8e;font-weight:700;letter-spacing:0.079px;">nick (Order Manager)</div>
<div class="t" style="left:48.00px;top:373.83px;font-size:23px;color:#d0d0d0;font-weight:400;letter-spacing:-0.041px;">Hi! Yes, I've handled sketch 651 'Space Mistakes'. I cut a REPROCESS-SKETCH</div>
<div class="t" style="left:48.00px;top:409.28px;font-size:23px;color:#d0d0d0;font-weight:400;letter-spacing:0.383px;">run (Run 5), marked the sketch as Reprocessing on SketchTV.lol, and</div>
<div class="t" style="left:48.00px;top:444.73px;font-size:23px;color:#d0d0d0;font-weight:400;letter-spacing:0.672px;">dispatched Sam to work on the content patch. The flag reason (headshot</div>
<div class="t" style="left:48.00px;top:480.18px;font-size:23px;color:#d0d0d0;font-weight:400;letter-spacing:0.639px;">images wrong, clear and regenerate) has been captured in the work order.</div>
<div class="t" style="left:48.00px;top:515.63px;font-size:23px;color:#d0d0d0;font-weight:400;letter-spacing:0.112px;">Thanks!</div>
<div class="t" style="right:341.50px;top:552.77px;font-size:20px;color:#8a8a8a;font-weight:400;letter-spacing:0.339px;">11:16 PM</div>
<div class="b" style="left:319px;top:610.6px;width:875px;height:138.89999999999998px;background:#1971c2;border-radius:25px"></div>
<div class="t" style="left:339.50px;top:635.48px;font-size:24px;color:#ffffff;font-weight:400;letter-spacing:0.117px;">great, actually we have another tech available now, wesley, can you give him</div>
<div class="t" style="left:339.50px;top:669.68px;font-size:24px;color:#ffffff;font-weight:400;letter-spacing:0.216px;">the reprocess order</div>
<div class="t" style="right:82.00px;top:708.97px;font-size:20px;color:rgba(255,255,255,0.7);font-weight:400;letter-spacing:0.268px;">11:20 PM</div>
<svg class="ic" style="left:1147.5px;top:704.9px;width:25px;height:25px;color:rgba(255,255,255,0.7);" viewBox="0 0 24 24" fill="none" stroke="currentColor" stroke-width="1.9" stroke-linecap="round" stroke-linejoin="round"><path d="M7 12l5 5l10 -10"/><path d="M2 12l5 5m5 -5l5 -5"/></svg>
<div class="b" style="left:28.5px;top:767px;width:873.0px;height:207.5px;background:#3b3b3b;border-radius:25px"></div>
<div class="t" style="left:48.00px;top:790.31px;font-size:20.3px;color:#8e8e8e;font-weight:700;letter-spacing:0.079px;">nick (Order Manager)</div>
<div class="t" style="left:48.00px;top:825.53px;font-size:23px;color:#d0d0d0;font-weight:400;letter-spacing:-0.069px;">Done! Wesley has been assigned to REPROCESS-SKETCH Run 5, Op 20</div>
<div class="t" style="left:48.00px;top:860.98px;font-size:23px;color:#d0d0d0;font-weight:400;letter-spacing:0.187px;">(Research &amp; Patch Content for Sketch 651). Sam is on NEW-SKETCH Run 41,</div>
<div class="t" style="left:48.00px;top:896.43px;font-size:23px;color:#d0d0d0;font-weight:400;letter-spacing:0.488px;">Op 40 (Update SketchTV.lol).</div>
<div class="t" style="right:341.50px;top:933.77px;font-size:20px;color:#8a8a8a;font-weight:400;letter-spacing:0.339px;">11:21 PM</div>
</div>
<div class="b" style="left:926px;top:1230px;width:1222px;height:1px;background:#424242"></div>
<svg class="ic" style="left:957px;top:1266.2px;width:31px;height:31px;color:#e0e0e0;" viewBox="0 0 24 24" fill="none" stroke="currentColor" stroke-width="2" stroke-linecap="round" stroke-linejoin="round"><path d="M15 7l-6.5 6.5a1.5 1.5 0 0 0 3 3l6.5 -6.5a3 3 0 0 0 -6 -6l-6.5 6.5a4.5 4.5 0 0 0 9 9l6.5 -6.5"/></svg>
<div class="b" style="left:1020px;top:1249px;width:1033px;height:62.5px;background:#2e2e2e;border:1.5px solid #1971c2;border-radius:7px"></div>
<div class="t" style="left:1044.00px;top:1267.33px;font-size:23.7px;color:#6b6b6b;font-weight:400;letter-spacing:0.004px;">Type a message to send to nick...</div>
<div class="b" style="left:1042px;top:1262px;width:2px;height:32px;background:#d8d8d8"></div>
<div class="b" style="left:2071px;top:1252px;width:59px;height:59.5px;background:#2c2c2c;border-radius:9px"></div>
<svg class="ic" style="left:2083.6px;top:1264.7px;width:33px;height:33px;color:#707070;" viewBox="0 0 24 24" fill="none" stroke="currentColor" stroke-width="2" stroke-linecap="round" stroke-linejoin="round"><path d="M10 14l11 -11"/><path d="M21 3l-6.5 18a.55 .55 0 0 1 -1 0l-3.5 -7l-7 -3.5a.55 .55 0 0 1 0 -1l18 -6.5"/></svg>
</body></html>
